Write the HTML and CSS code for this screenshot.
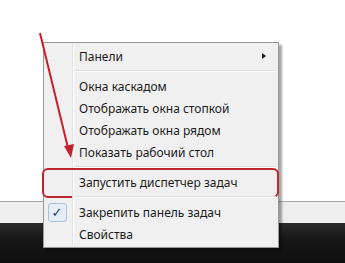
FILE: index.html
```html
<!DOCTYPE html>
<html lang="ru">
<head>
    <meta charset="UTF-8">
    <title>Меню панели задач</title>
    <link rel="stylesheet" href="styles.css">
</head>
<body>
    <div class="desktop">
        <div class="screen"></div>
        <div class="band"></div>
        <div class="taskbar"></div>
    </div>

    <!-- Контекстное меню панели задач -->
    <div class="menu">
        <div class="item">
            <span class="gutter"></span>
            <span class="label">Панели</span>
            <span class="submenu"></span>
        </div>
        <div class="sep"></div>
        <div class="item"><span class="gutter"></span><span class="label">Окна каскадом</span></div>
        <div class="item"><span class="gutter"></span><span class="label">Отображать окна стопкой</span></div>
        <div class="item"><span class="gutter"></span><span class="label">Отображать окна рядом</span></div>
        <div class="item"><span class="gutter"></span><span class="label">Показать рабочий стол</span></div>
        <div class="sep"></div>
        <div class="item marked"><span class="gutter"></span><span class="label">Запустить диспетчер задач</span></div>
        <div class="sep"></div>
        <div class="item">
            <span class="gutter"><span class="check">✓</span></span>
            <span class="label">Закрепить панель задач</span>
        </div>
        <div class="item"><span class="gutter"></span><span class="label">Свойства</span></div>
    </div>

    <svg class="arrow" width="345" height="263" viewBox="0 0 345 263" xmlns="http://www.w3.org/2000/svg">
        <line x1="40" y1="33" x2="68" y2="148" stroke="#c8202a" stroke-width="2"/>
        <polygon points="64,146 74,144 71,158" fill="#c8202a"/>
    </svg>
</body>
</html>
```

FILE: styles.css
```css
body {
    margin: 0;
    padding: 0;
    font-family: 'Noto Sans', 'Open Sans', sans-serif;
    font-size: 12px;
    color: #1b1b1b;
    overflow: hidden;
}

.desktop {
    width: 345px;
    height: 263px;
    display: flex;
    flex-direction: column;
}

.screen {
    height: 201px;
    background-color: #ffffff;
}

.band {
    height: 21px;
    background-color: #eeeeee;
    border-top: 1px solid #a9a9a9;
}

.taskbar {
    flex: 1;
    background: linear-gradient(#2c2c2c, #161616 40%, #0e0e0e);
}

/* Menu */
.menu {
    position: absolute;
    left: 43px;
    top: 42px;
    width: 230px;
    padding: 2px;
    background-color: #f0f0f0;
    border: 1px solid #979797;
    box-shadow: 3px 3px 2px rgba(0, 0, 0, 0.35);
}

.item {
    position: relative;
    height: 22px;
    display: flex;
    align-items: center;
}

.gutter {
    width: 26px;
    height: 100%;
    margin-right: 6px;
    border-right: 1px solid #e2e3e3;
    box-shadow: 1px 0 0 #ffffff;
    display: flex;
    align-items: center;
    justify-content: center;
}

.label {
    flex: 1;
    white-space: nowrap;
}

.submenu {
    width: 0;
    height: 0;
    margin-right: 10px;
    border-left: 4px solid #111111;
    border-top: 3.5px solid transparent;
    border-bottom: 3.5px solid transparent;
}

.sep {
    height: 8px;
    display: flex;
    align-items: center;
    position: relative;
}

.sep::before {
    content: '';
    width: 26px;
    height: 100%;
    border-right: 1px solid #e2e3e3;
    box-shadow: 1px 0 0 #ffffff;
}

.sep::after {
    content: '';
    flex: 1;
    height: 1px;
    margin-left: 1px;
    background-color: #e0e0e0;
    border-bottom: 1px solid #ffffff;
}

.check {
    width: 19px;
    height: 19px;
    margin-left: -4px;
    box-sizing: border-box;
    border: 1px solid #a8c1dc;
    border-radius: 3px;
    background-color: #e6edf5;
    color: #1f3a7a;
    font-family: 'DejaVu Sans', sans-serif;
    font-size: 13px;
    font-weight: bold;
    display: flex;
    align-items: center;
    justify-content: center;
}

.marked::after {
    content: '';
    position: absolute;
    left: -4px;
    right: -3px;
    top: -3px;
    bottom: -5px;
    border: 2px solid #c0262e;
    border-radius: 6px;
}

.arrow {
    position: absolute;
    left: 0;
    top: 0;
}
```
